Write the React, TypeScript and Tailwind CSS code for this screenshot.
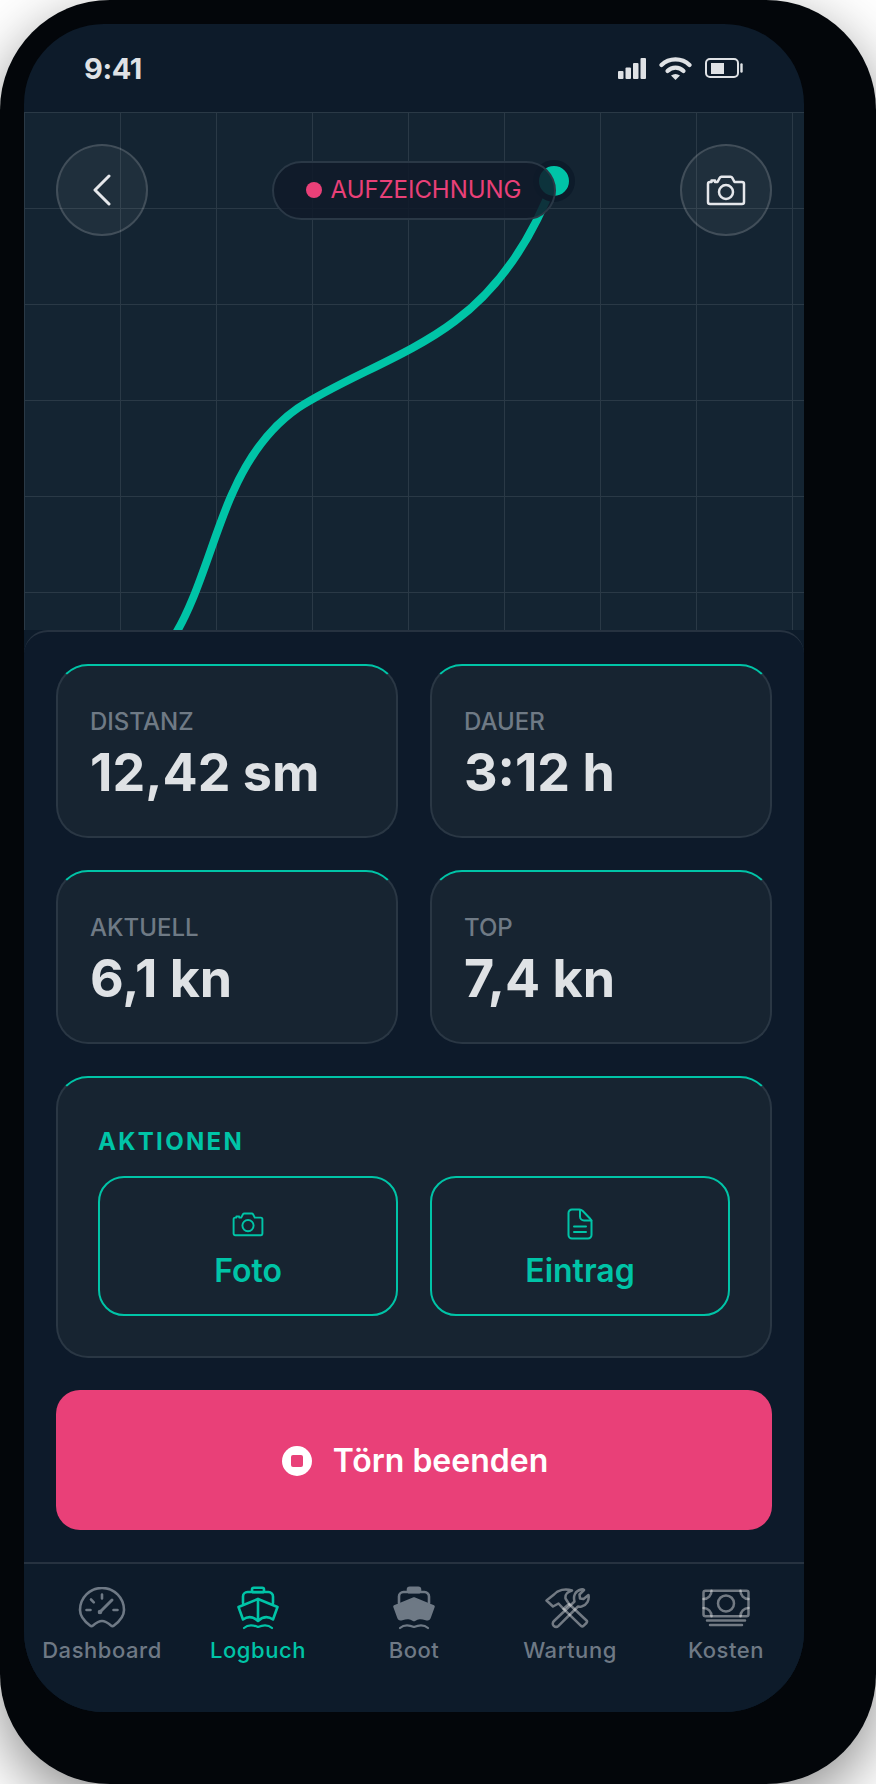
import React from "react";

function CameraIcon({ className, sw = 2.5 }: { className?: string; sw?: number }) {
  return (
    <svg viewBox="0 0 40 32" fill="none" className={className} stroke="currentColor" strokeWidth={sw} strokeLinejoin="round" strokeLinecap="round">
      <path d="M2 10a2 2 0 0 1 2-2h1.5V6.5H9V8h2.5l2.2-4.2a2 2 0 0 1 1.7-1h9.2a2 2 0 0 1 1.7 1L28.5 8H36a2 2 0 0 1 2 2v18a2 2 0 0 1-2 2H4a2 2 0 0 1-2-2Z" />
      <circle cx="20" cy="18" r="7" />
    </svg>
  );
}

function DocIcon({ className }: { className?: string }) {
  return (
    <svg viewBox="0 0 26 32" fill="none" className={className} stroke="currentColor" strokeWidth="2" strokeLinejoin="round" strokeLinecap="round">
      <path d="M6 1.5h6.5c1.2 0 2.2.5 3 1.3l7.7 8c.8.8 1.3 1.8 1.3 3V27a3.5 3.5 0 0 1-3.5 3.5H5A3.5 3.5 0 0 1 1.5 27V5A3.5 3.5 0 0 1 5 1.5Z" />
      <path d="M13 2v6.5a4 4 0 0 0 4 4h7.5" />
      <path d="M7 18.5h12M7 24h12" />
    </svg>
  );
}

function GaugeIcon() {
  return (
    <svg viewBox="0 0 48 42" width="48" height="42" fill="none" stroke="currentColor" strokeWidth="2.6" strokeLinecap="round" strokeLinejoin="round">
      <path d="M12 38.5C6 34 2 29 2 23A22 22 0 0 1 46 23C46 29 42 34 36 38.5C35 39.3 34 39.3 33 38.5C29.500 35.500 27 34 24 34C21 34 18.500 35.500 15 38.500C14 39.300 13 39.300 12 38.500Z" />
      <path d="M24 7.500V11.500M13 12.500L15.800 15.300M8.500 23H12.500M35.500 23H39.500" />
      <path d="M21.500 25.500L34 13" strokeWidth="3" />
      <circle cx="22" cy="25" r="2.300" fill="currentColor" stroke="none" />
    </svg>
  );
}

function BoatIcon({ filled }: { filled?: boolean }) {
  return (
    <svg viewBox="0 0 44 44" width="44" height="44" fill="none" stroke="currentColor" strokeWidth="2.6" strokeLinecap="round" strokeLinejoin="round">
      <rect x="16" y="1.800" width="12" height="4.400" rx="1.800" fill={filled ? "currentColor" : "none"} />
      <path d="M7 17V10.500A4.500 4.500 0 0 1 11.500 6H32.500A4.500 4.500 0 0 1 37 10.500V17" />
      <path
        d={filled ? "M22 12.500L2.500 20.500L6.500 31.500C7 33 8.500 33.500 10 33C16 31 18 32 22 34C26 32 28 31 34 33C35.500 33.500 37 33 37.500 31.500L41.500 20.500Z" : "M22 13L2.500 21L7 33.500C12 30 16.500 30 22 35C27.500 30 32 30 37 33.500L41.500 21Z"}
        fill={filled ? "currentColor" : "none"}
      />
      {!filled && <path d="M22 13V34" />}
      <path d="M8 42C12 38.500 16 38.500 22 41C28 38.500 32 38.500 36 42" strokeWidth="2.200" />
    </svg>
  );
}

function ToolsIcon() {
  return (
    <svg viewBox="0 0 50 42" width="50" height="42" fill="none" stroke="#ffffff" strokeOpacity="0.42" strokeWidth="2.500" strokeLinecap="round" strokeLinejoin="round">
      <path d="M24 17L41.500 33.500C42.200 34.200 42.200 35.200 41.500 36L38.500 38.800C37.800 39.500 36.800 39.500 36 38.800L18.500 21.800" />
      <path d="M1.500 13.500L9 7.500C13 3 20 1.500 27 3.500C22 5 20 7 20.500 11.500L24 17L18.500 21.800L13.500 16.500L8 19.500Z" />
      <path d="M9 34L29.500 14.500C28 9 30 4 36 2.500C37.500 2.200 38.500 2.500 39 3L34.500 7.500L35 11.500L38.500 12L43.500 8C44.500 13 42 18 36.500 19.500C35 19.800 34 19.700 33 19.500L13.500 38.800C12 40.200 10 40 8.700 38.800C7.300 37.500 7.500 35.500 9 34Z" />
    </svg>
  );
}

function MoneyIcon() {
  return (
    <svg viewBox="0 0 48 40" width="48" height="40" fill="none" stroke="#ffffff" strokeOpacity="0.42" strokeWidth="2.500" strokeLinecap="round" strokeLinejoin="round">
      <rect x="1.500" y="2.700" width="45" height="25.500" rx="2" />
      <circle cx="24" cy="15.400" r="8" />
      <path d="M1.500 11A8 8 0 0 0 9.500 2.700M38.500 2.700A8 8 0 0 0 46.500 11M1.500 20A8 8 0 0 1 9.500 28.200M38.500 28.200A8 8 0 0 1 46.500 20" />
      <path d="M5 32.500H43M8 37H40" />
    </svg>
  );
}

function StatCard({ label, value }: { label: string; value: string }) {
  return (
    <div className="flex h-[174px] flex-col justify-center rounded-[32px] border-2 border-[#2a3744] border-t-[#00c4a7] bg-[#172431] pl-[32px] pt-[6px]">
      <div className="text-[24px] font-medium leading-[32px] text-[#6f7a85]">{label}</div>
      <div className="mt-[6px] text-[52px] font-bold leading-[58px] text-[#dfe2e5]">{value}</div>
    </div>
  );
}

function NavItem({ icon, label, active }: { icon: React.ReactNode; label: string; active?: boolean }) {
  return (
    <div className={`flex flex-col items-center ${active ? "text-[#00c4a7]" : "text-[#6e7985]"}`}>
      <div className="flex h-[44px] items-center justify-center">{icon}</div>
      <div className="mt-[5px] text-[22px] font-medium leading-[30px] tracking-[0.55px]">{label}</div>
    </div>
  );
}

function ActionButton({ icon, label }: { icon: React.ReactNode; label: string }) {
  return (
    <div className="flex h-[140px] flex-col items-center justify-center gap-[11px] rounded-[26px] border-2 border-[#00c4a7] pt-[7px] text-[#00c4a7]">
      <div className="flex h-[32px] items-center justify-center">{icon}</div>
      <span className="text-[32px] font-semibold leading-[40px]">{label}</span>
    </div>
  );
}

export default function App() {
  return (
    <div className="h-[1784px] w-[876px] overflow-hidden bg-white [font-family:Inter,sans-serif]">
      <div className="h-[1784px] w-[876px] rounded-[110px] bg-[#03060a] p-[24px] shadow-[0_20px_60px_rgba(0,0,0,0.45)]">
        <div className="flex h-[1688px] w-[780px] flex-col overflow-hidden rounded-[80px] bg-[#0d1b2a]">
          {/* status bar */}
          <div className="flex h-[88px] shrink-0 items-center justify-between px-[60px] text-[#dfe2e5]">
            <span className="text-[29px] font-bold leading-none tracking-[-0.4px]">9:41</span>
            <div className="flex items-center gap-[13px]">
              <svg width="28" height="21" viewBox="0 0 28 21" fill="currentColor">
                <rect x="0" y="13" width="5.500" height="8" rx="1" />
                <rect x="7.500" y="9.500" width="5.500" height="11.500" rx="1" />
                <rect x="15" y="5" width="5.500" height="16" rx="1" />
                <rect x="22.500" y="0" width="5.500" height="21" rx="1" />
              </svg>
              <svg width="33" height="24" viewBox="0 0 33 24" fill="none" stroke="currentColor" strokeWidth="4.200" strokeLinecap="round">
                <path d="M2.500 9C10 1.500 23 1.500 30.500 9" />
                <path d="M8.500 15C13 10.500 20 10.500 24.500 15" />
                <path d="M16.500 24L12 19.500C15 17.500 18 17.500 21 19.500Z" fill="currentColor" stroke="none" />
              </svg>
              <svg width="39" height="20" viewBox="0 0 39 20" fill="none">
                <rect x="1" y="1" width="32" height="18" rx="4" stroke="currentColor" strokeWidth="2" />
                <rect x="6" y="5" width="13" height="11" fill="currentColor" />
                <path d="M36.500 6.500V13.500" stroke="currentColor" strokeWidth="2.400" strokeLinecap="round" />
              </svg>
            </div>
          </div>

          {/* map */}
          <div className="relative h-[518px] shrink-0 bg-[#142432] bg-[linear-gradient(#2a3946_1.5px,transparent_1.5px),linear-gradient(90deg,#2a3946_1.5px,transparent_1.5px)] bg-[size:96px_96px]">
            <svg className="absolute inset-0" width="780" height="518" viewBox="0 0 780 518" fill="none">
              <path d="M146 530C172 495 190 420 209 380C225 344 245 316 274 296C320 266 385 244 431 209C470 180 505 135 530 69" stroke="#00c4a7" strokeWidth="8" />
              <circle cx="530" cy="69" r="18" fill="#00c4a7" stroke="#0d1b2a" strokeWidth="6" />
            </svg>
            <div className="relative flex items-center justify-between px-[32px] pt-[32px]">
              <div className="flex h-[92px] w-[92px] items-center justify-center rounded-full border-2 border-white/15 bg-white/5 text-[#e5e7eb]">
                <svg width="20" height="32" viewBox="0 0 20 32" fill="none" stroke="currentColor" strokeWidth="3" strokeLinecap="round" strokeLinejoin="round">
                  <path d="M17 2L3 16L17 30" />
                </svg>
              </div>
              <div className="flex h-[59px] items-center gap-[9px] rounded-full border-2 border-[#2a3846] bg-[#0f1a29]/85 pl-[32px] pr-[33px]">
                <span className="h-[16px] w-[16px] rounded-full bg-[#e94078]" />
                <span className="text-[24px] leading-none tracking-[-0.05px] text-[#e94078]">AUFZEICHNUNG</span>
              </div>
              <div className="flex h-[92px] w-[92px] items-center justify-center rounded-full border-2 border-white/15 bg-white/5 text-[#e5e7eb]">
                <CameraIcon className="h-[32px] w-[40px]" />
              </div>
            </div>
          </div>

          {/* panel */}
          <div className="flex flex-1 flex-col gap-[32px] rounded-t-[24px] border-t-2 border-[#263240] bg-[#0d1a2a] px-[32px] pt-[32px]">
            <div className="grid grid-cols-2 gap-[32px]">
              <StatCard label="DISTANZ" value="12,42 sm" />
              <StatCard label="DAUER" value="3:12 h" />
              <StatCard label="AKTUELL" value="6,1 kn" />
              <StatCard label="TOP" value="7,4 kn" />
            </div>

            <div className="h-[282px] rounded-[32px] border-2 border-[#2a3744] border-t-[#00c4a7] bg-[#172431] px-[40px] pt-[48px]">
              <div className="text-[24px] font-bold leading-[32px] tracking-[2.300px] text-[#00c4a7]">AKTIONEN</div>
              <div className="mt-[18px] grid grid-cols-2 gap-[32px]">
                <ActionButton icon={<CameraIcon className="h-[26px] w-[32px]" sw={2.4} />} label="Foto" />
                <ActionButton icon={<DocIcon className="h-[32px] w-[26px]" />} label="Eintrag" />
              </div>
            </div>

            <div className="flex h-[140px] items-center justify-center gap-[21px] rounded-[24px] bg-[#e94078] pl-[2px] pt-[1px] text-white">
              <span className="flex h-[30px] w-[30px] items-center justify-center rounded-full bg-white">
                <span className="h-[12px] w-[12px] rounded-[2px] bg-[#e94078]" />
              </span>
              <span className="text-[32px] font-semibold leading-none">Törn beenden</span>
            </div>
          </div>

          {/* nav */}
          <div className="grid h-[150px] shrink-0 grid-cols-5 border-t-2 border-[#263240] bg-[#0d1b2a] pt-[22px]">
            <NavItem icon={<GaugeIcon />} label="Dashboard" />
            <NavItem icon={<BoatIcon />} label="Logbuch" active />
            <NavItem icon={<BoatIcon filled />} label="Boot" />
            <NavItem icon={<ToolsIcon />} label="Wartung" />
            <NavItem icon={<MoneyIcon />} label="Kosten" />
          </div>
        </div>
      </div>
    </div>
  );
}
